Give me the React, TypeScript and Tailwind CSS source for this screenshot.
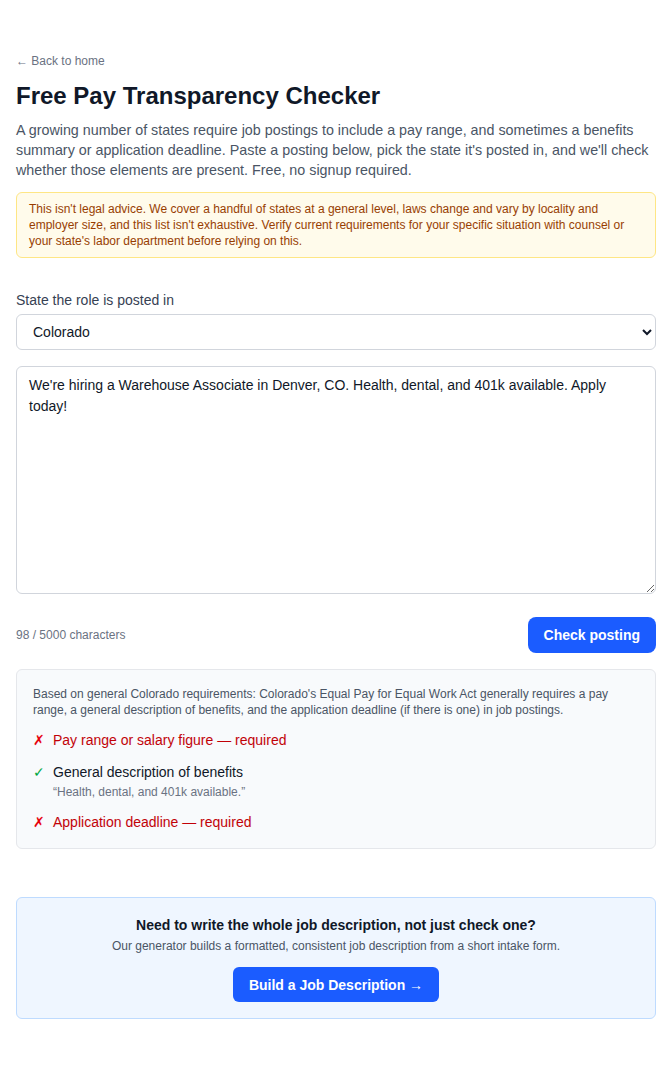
import React, { useState } from "react";

const FONT = { fontFamily: '"Liberation Sans", Arial, sans-serif' };

export default function App() {
  const [text, setText] = useState(
    "We're hiring a Warehouse Associate in Denver, CO. Health, dental, and 401k available. Apply today!"
  );
  return (
    <div className="min-h-[1067px] bg-white" style={FONT}>
      <div className="px-4 pt-[53px] pb-12">
        <a href="#" className="block text-xs leading-4 text-gray-500">
          ← Back to home
        </a>
        <h1 className="mt-[11px] text-2xl font-bold leading-8 text-gray-900">
          Free Pay Transparency Checker
        </h1>
        <p className="mt-2 text-[14.3px] leading-5 text-gray-600">
          A growing number of states require job postings to include a pay range, and sometimes a benefits summary or
          application deadline. Paste a posting below, pick the state it's posted in, and we'll check whether those
          elements are present. Free, no signup required.
        </p>
        <div className="mt-3 rounded-md border border-amber-200 bg-amber-50 px-3 py-2 text-xs leading-4 text-amber-800">
          This isn't legal advice. We cover a handful of states at a general level, laws change and vary by locality and
          employer size, and this list isn't exhaustive. Verify current requirements for your specific situation with
          counsel or your state's labor department before relying on this.
        </div>

        <label className="mt-8 block text-sm leading-5 text-gray-700">State the role is posted in</label>
        <select
          className="mt-1 block h-9 w-full rounded-md border border-gray-300 bg-white px-3 text-sm text-gray-900"
          defaultValue="Colorado"
        >
          <option>California</option>
          <option>Colorado</option>
          <option>New York</option>
          <option>Washington</option>
        </select>

        <textarea
          className="mt-4 block h-[228px] w-full rounded-md border border-gray-300 px-3 py-[8px] text-sm leading-[21px] text-gray-900"
          value={text}
          onChange={(e) => setText(e.target.value)}
        />

        <div className="mt-[23px] flex items-center justify-between">
          <span className="text-xs text-gray-500">{text.length} / 5000 characters</span>
          <button className="h-9 rounded-lg bg-[#1b5cff] px-4 text-sm font-bold text-white">Check posting</button>
        </div>

        <div className="mt-4 rounded-md border border-gray-200 bg-[#f8fafc] p-4">
          <p className="text-xs leading-4 text-gray-600">
            Based on general Colorado requirements: Colorado's Equal Pay for Equal Work Act generally requires a pay
            range, a general description of benefits, and the application deadline (if there is one) in job postings.
          </p>
          <ul className="mt-3 flex flex-col gap-3">
            <li className="flex gap-2 text-sm leading-5">
              <span className="w-3 text-red-600">✗</span>
              <span className="text-red-700">Pay range or salary figure — required</span>
            </li>
            <li className="flex gap-2 text-sm leading-5">
              <span className="w-3 text-green-600">✓</span>
              <div>
                <div className="text-gray-900">General description of benefits</div>
                <div className="mt-[2px] text-xs leading-4 text-gray-500">“Health, dental, and 401k available.”</div>
              </div>
            </li>
            <li className="flex gap-2 text-sm leading-5">
              <span className="w-3 text-red-600">✗</span>
              <span className="text-red-700">Application deadline — required</span>
            </li>
          </ul>
        </div>

        <div className="mt-12 rounded-md border border-blue-200 bg-blue-50 px-4 pt-[17px] pb-4 text-center">
          <h2 className="text-sm font-bold leading-5 text-gray-900">
            Need to write the whole job description, not just check one?
          </h2>
          <p className="mt-[3px] text-xs leading-4 text-gray-600">
            Our generator builds a formatted, consistent job description from a short intake form.
          </p>
          <a
            href="#"
            className="mt-[13px] inline-flex h-[35px] items-center rounded-md bg-[#1b5cff] px-4 align-top text-sm font-bold text-white"
          >
            Build a Job Description →
          </a>
        </div>
      </div>
    </div>
  );
}
